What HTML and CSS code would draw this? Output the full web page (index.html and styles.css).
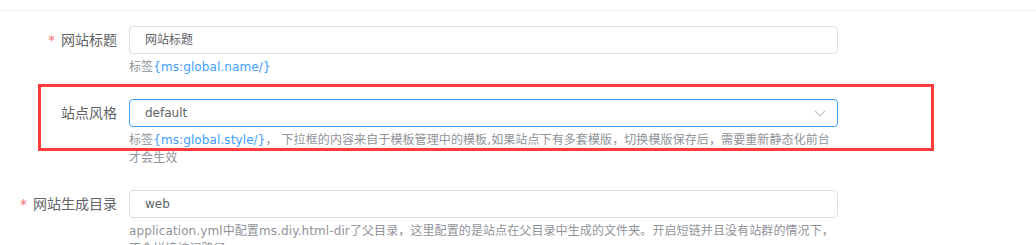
FILE: index.html
```html
<!DOCTYPE html>
<html lang="zh">
<head>
  <meta charset="UTF-8">
  <meta name="viewport" content="width=device-width, initial-scale=1.0">
  <title>站点设置</title>
  <link rel="stylesheet" href="styles.css">
</head>
<body>

  <div class="top-bar"></div>

  <div class="form">

    <div class="form-item">
      <label class="label is-required">网站标题</label>
      <div class="content">
        <div class="input">网站标题</div>
        <div class="tip">标签<span class="tag">{ms:global.name/}</span></div>
      </div>
    </div>

    <div class="form-item marked">
      <label class="label">站点风格</label>
      <div class="content">
        <div class="input select is-focus">
          <span>default</span>
          <svg class="arrow" width="12" height="7" viewBox="0 0 12 7">
            <path d="M1 1 L6 6 L11 1" fill="none" stroke="#c0c4cc" stroke-width="1.2"/>
          </svg>
        </div>
        <div class="tip">标签<span class="tag">{ms:global.style/}</span>， 下拉框的内容来自于模板管理中的模板,如果站点下有多套模版，切换模版保存后，需要重新静态化前台才会生效</div>
      </div>
      <div class="red-mark"></div>
    </div>

    <div class="form-item">
      <label class="label is-required">网站生成目录</label>
      <div class="content">
        <div class="input">web</div>
        <div class="tip">application.yml中配置ms.diy.html-dir了父目录，这里配置的是站点在父目录中生成的文件夹。开启短链并且没有站群的情况下，不会拼接访问路径</div>
      </div>
    </div>

  </div>

</body>
</html>
```

FILE: styles.css
```css
body {
  margin: 0;
  background-color: #fff;
  font-family: "DejaVu Sans", "Noto Sans CJK SC", sans-serif;
  overflow: hidden;
}

.top-bar {
  height: 10px;
  border-bottom: 1px solid #ebeef5;
}

.form {
  padding-top: 15px;
}

.form-item {
  position: relative;
  display: flex;
  margin-bottom: 23px;
}

.label {
  width: 117px;
  padding-right: 12px;
  text-align: right;
  font-size: 14px;
  line-height: 28px;
  color: #606266;
  flex-shrink: 0;
}

.is-required::before {
  content: "*";
  color: #f56c6c;
  margin-right: 6px;
}

.content {
  width: 709px;
}

.input {
  box-sizing: border-box;
  height: 28px;
  line-height: 26px;
  padding: 0 15px;
  border: 1px solid #dcdfe6;
  border-radius: 4px;
  font-size: 12px;
  color: #606266;
}

.select {
  display: flex;
  justify-content: space-between;
  align-items: center;
  padding-right: 11px;
}

.is-focus {
  border-color: #409eff;
}

.tip {
  margin-top: 4px;
  font-size: 12px;
  line-height: 18px;
  letter-spacing: 0.1px;
  color: #909399;
}

.tag {
  color: #409eff;
}

.red-mark {
  position: absolute;
  top: -15px;
  left: 38px;
  width: 890px;
  height: 61px;
  border: 3px solid #ff3b3b;
  pointer-events: none;
}
```
